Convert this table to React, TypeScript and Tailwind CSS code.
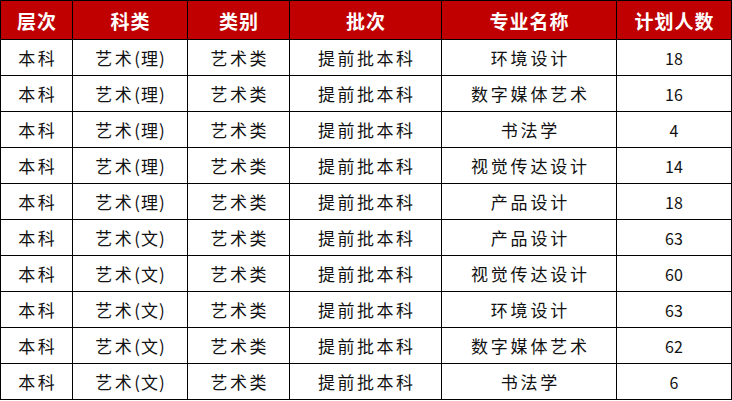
import React from "react";

const rows: [string, string, string][] = [
  ["理", "环境设计", "18"],
  ["理", "数字媒体艺术", "16"],
  ["理", "书法学", "4"],
  ["理", "视觉传达设计", "14"],
  ["理", "产品设计", "18"],
  ["文", "产品设计", "63"],
  ["文", "视觉传达设计", "60"],
  ["文", "环境设计", "63"],
  ["文", "数字媒体艺术", "62"],
  ["文", "书法学", "6"],
];

const headers = ["层次", "科类", "类别", "批次", "专业名称", "计划人数"];

export default function App() {
  return (
    <div
      className="w-[732px] h-[401px] bg-white"
      style={{ fontFamily: '"Noto Sans CJK SC", "Noto Sans", sans-serif' }}
    >
      <div className="grid grid-cols-[71px_114px_101px_151px_174px_114px] grid-rows-[38px_repeat(10,35px)] gap-px bg-black p-px w-[732px]">
        {headers.map((h) => (
          <div
            key={h}
            className="bg-[#c00000] text-white font-bold text-[19px] flex items-center justify-center tracking-[1px] leading-none pl-[1px]"
          >
            {h}
          </div>
        ))}
        {rows.map(([k, major, n], i) => (
          <React.Fragment key={i}>
            <div className="bg-white text-[#111] text-[17px] flex items-center justify-center tracking-[2.5px] leading-none pl-[2.5px]">
              本科
            </div>
            <div className="bg-white text-[#111] text-[17px] flex items-center justify-center leading-none">
              <span className="tracking-[2.5px]">艺术</span>
              <span>(</span>
              <span className="px-[1px]">{k}</span>
              <span>)</span>
            </div>
            <div className="bg-white text-[#111] text-[17px] flex items-center justify-center tracking-[2.5px] leading-none pl-[2.5px]">
              艺术类
            </div>
            <div className="bg-white text-[#111] text-[17px] flex items-center justify-center tracking-[2.5px] leading-none pl-[2.5px]">
              提前批本科
            </div>
            <div className="bg-white text-[#111] text-[17px] flex items-center justify-center tracking-[2.8px] leading-none pl-[2.8px]">
              {major}
            </div>
            <div className="bg-white text-[#111] text-[16px] flex items-center justify-center leading-none">
              {n}
            </div>
          </React.Fragment>
        ))}
      </div>
    </div>
  );
}
